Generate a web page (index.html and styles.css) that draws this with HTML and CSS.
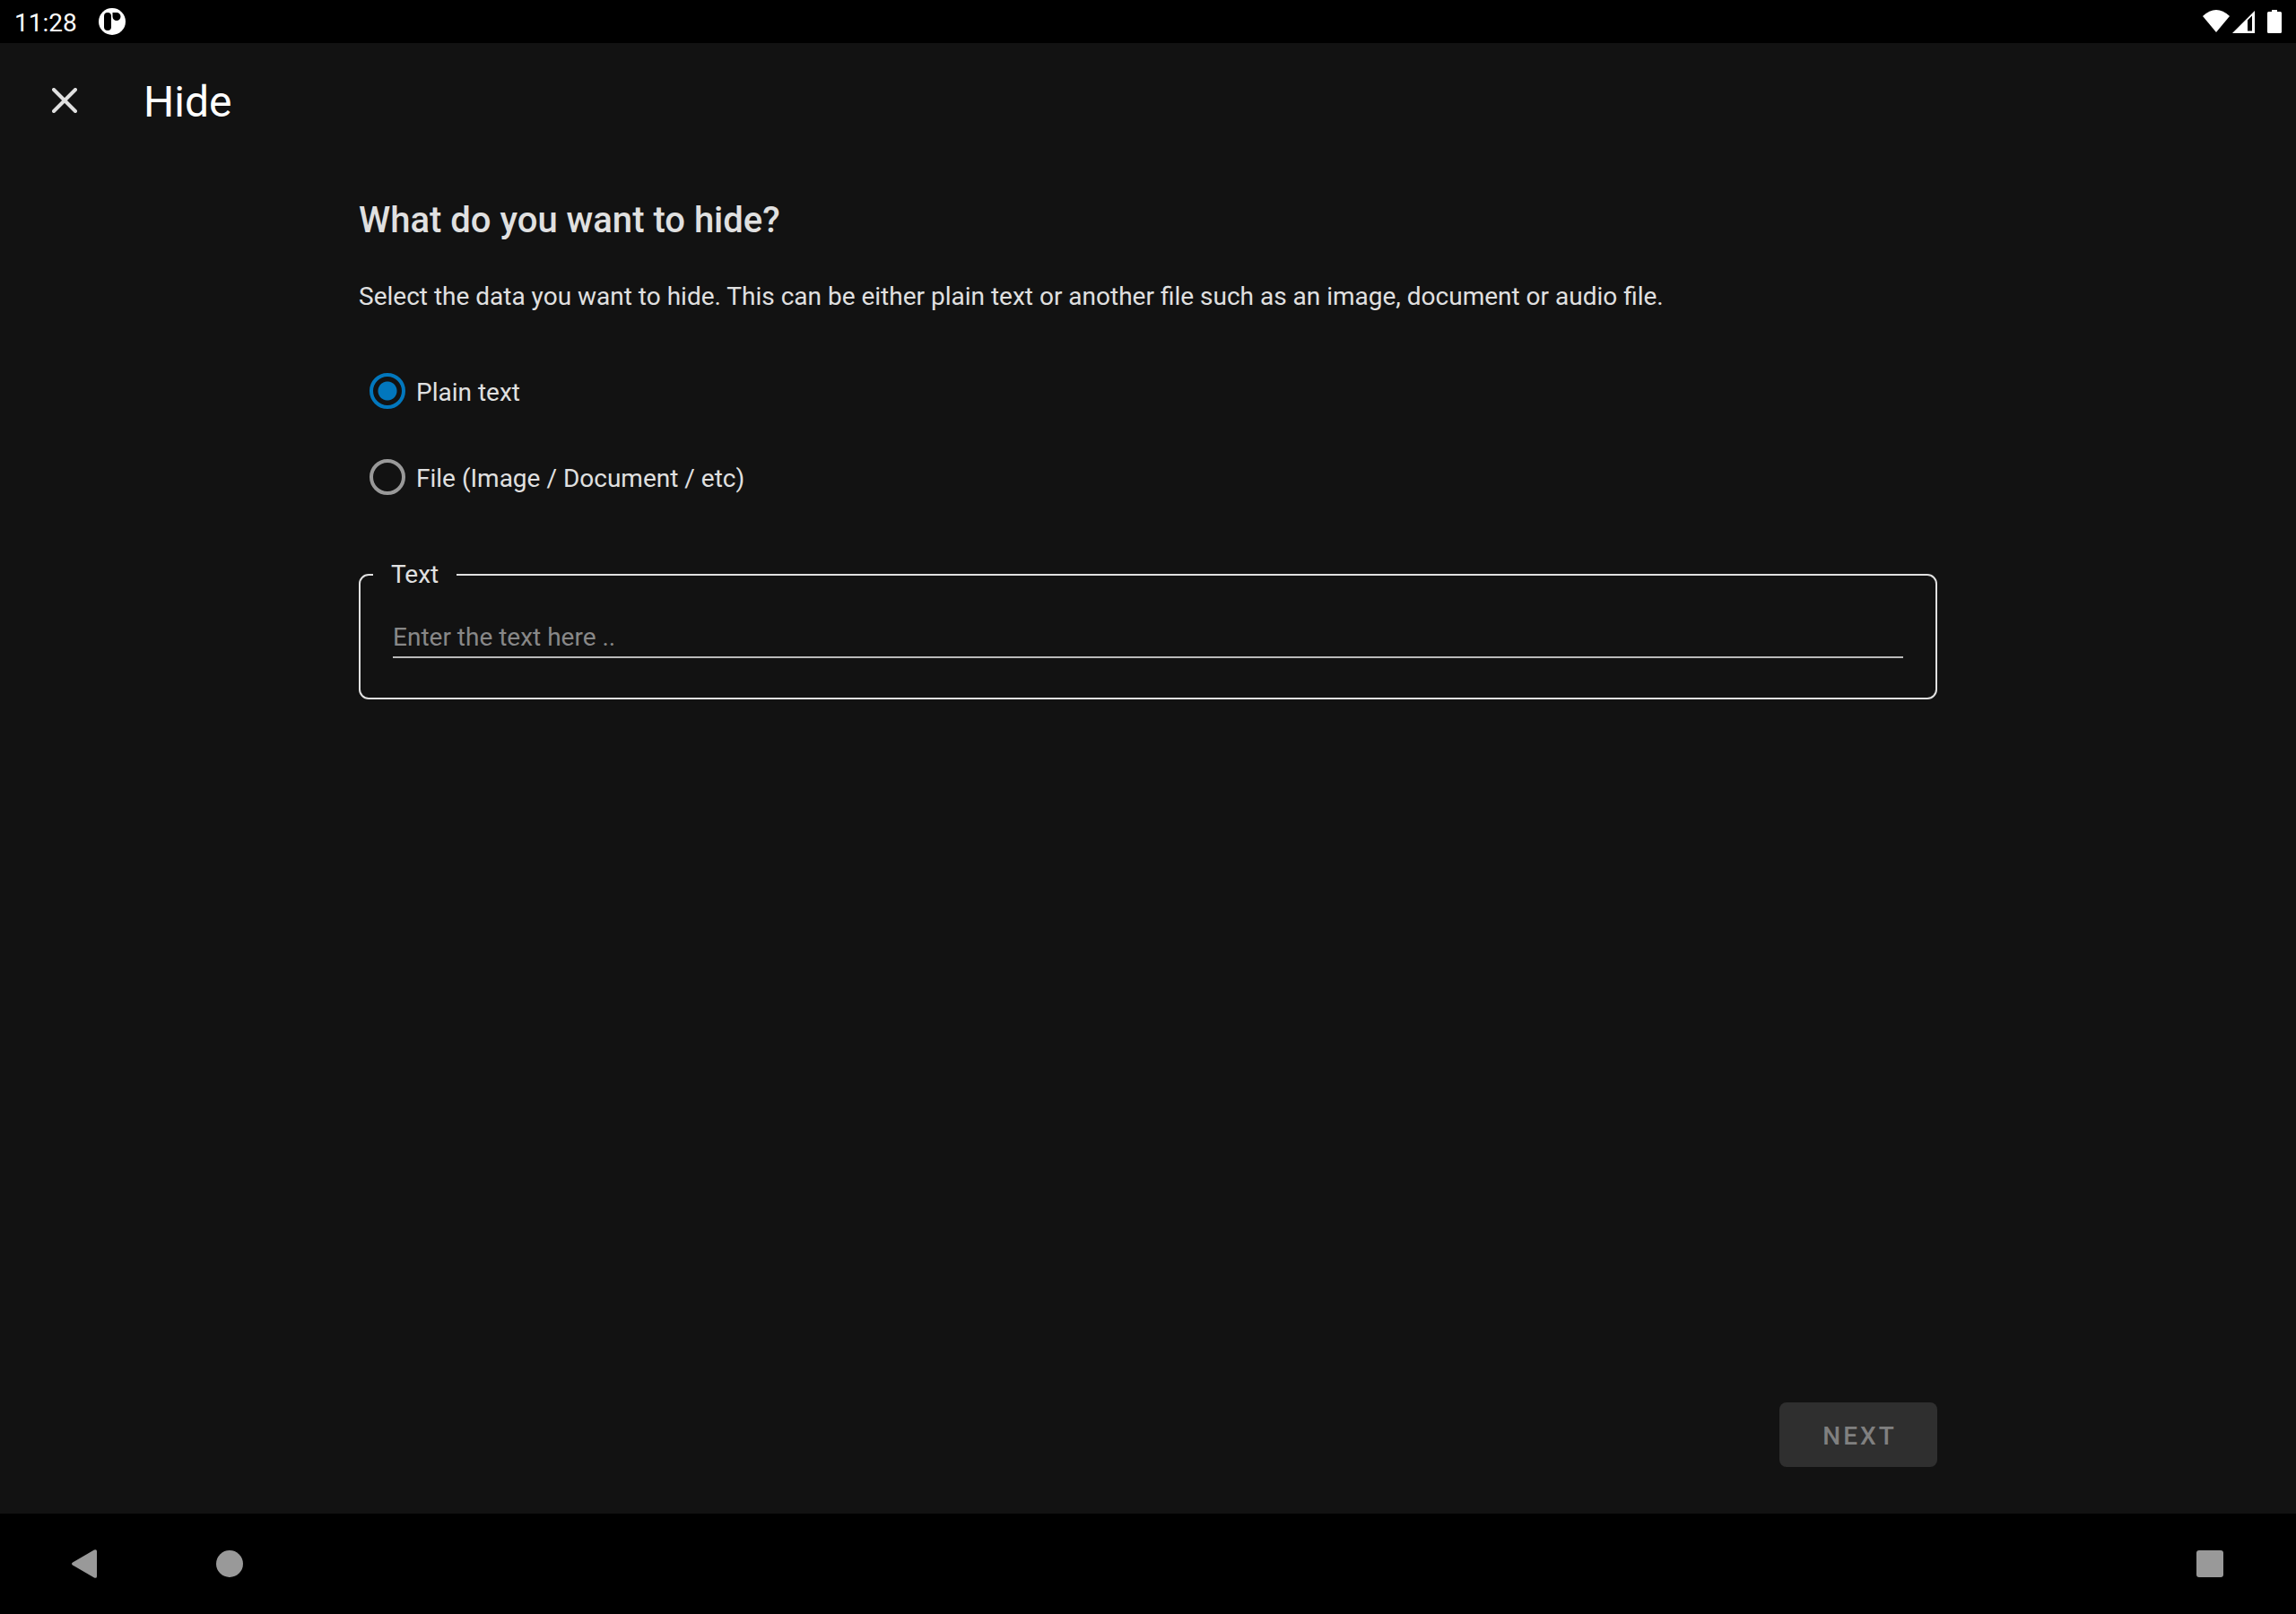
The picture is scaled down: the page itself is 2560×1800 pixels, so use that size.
FILE: index.html
```html
<!DOCTYPE html>
<html lang="en">
<head>
<meta charset="utf-8">
<meta name="viewport" content="width=device-width, initial-scale=1">
<title>Hide</title>
<link rel="stylesheet" href="styles.css">
</head>
<body>
<div class="screen">
  <div class="status-bar">
    <div class="status-group">
      <time class="clock">11:28</time>
      <svg class="status-icon" width="32" height="32" viewBox="0 0 32 32" aria-hidden="true">
        <circle cx="16" cy="16" r="15" fill="#fff"/>
        <rect x="7" y="6" width="8" height="20" rx="4" fill="#000"/>
        <path d="M16.500 6H21A4.500 4.500 0 1 1 16.500 10.500Z" fill="#000"/>
      </svg>
    </div>
    <svg width="90" height="28" viewBox="0 0 90 28" role="img" aria-label="Wi-Fi, mobile signal, battery">
      <path d="M0 8Q15-6 30 8L15 26Z" fill="#fff"/>
      <path d="M33 27L58 2V27ZM50 12.500V24.500H55V7.500Z" fill="#fff" fill-rule="evenodd"/>
      <path d="M77 1H83V3H86.500Q88 3 88 4.500V25.500Q88 27 86.500 27H73.500Q72 27 72 25.500V4.500Q72 3 73.500 3H77Z" fill="#fff"/>
    </svg>
  </div>
  <header class="app-bar">
    <button class="icon-button" type="button" aria-label="Close">
      <svg width="28" height="28" viewBox="0 0 28 28" aria-hidden="true">
        <path d="M2 2L26 26M26 2L2 26" stroke="#e0e0e0" stroke-width="4" stroke-linecap="round"/>
      </svg>
    </button>
    <h1 class="app-title">Hide</h1>
  </header>
  <main class="content">
    <h2 class="heading">What do you want to hide?</h2>
    <p class="intro">Select the data you want to hide. This can be either plain text or another file such as an image, document or audio file.</p>
    <div class="options" role="radiogroup" aria-label="Data type">
      <label class="option"><input class="radio" type="radio" name="kind" value="text" checked><span class="option-text">Plain text</span></label>
      <label class="option"><input class="radio" type="radio" name="kind" value="file"><span class="option-text">File (Image / Document / etc)</span></label>
    </div>
    <fieldset class="group">
      <legend class="group-title">Text</legend>
      <input class="text-field" type="text" placeholder="Enter the text here .." aria-label="Text">
    </fieldset>
    <div class="actions">
      <button class="next-button" type="button" disabled>NEXT</button>
    </div>
  </main>
  <nav class="nav-bar" aria-label="System navigation">
    <div class="nav-group">
      <button class="icon-button" type="button" aria-label="Back">
        <svg width="32" height="32" viewBox="0 0 32 32" aria-hidden="true"><path d="M3 14.600L27 .4Q30 -.5 30 2V30Q30 32.500 27 31.600L3 17.400Q1 16 3 14.600Z" fill="#999"/></svg>
      </button>
      <button class="icon-button" type="button" aria-label="Home">
        <svg width="32" height="32" viewBox="0 0 32 32" aria-hidden="true"><circle cx="16" cy="16" r="15" fill="#999"/></svg>
      </button>
    </div>
    <button class="icon-button" type="button" aria-label="Recent apps">
      <svg width="32" height="32" viewBox="0 0 32 32" aria-hidden="true"><rect x="1" y="1" width="30" height="30" rx="3" fill="#999"/></svg>
    </button>
  </nav>
</div>
</body>
</html>
```
FILE: styles.css
```css
* {
  box-sizing: border-box;
}

body {
  margin: 0;
  background: #121212;
  color: #e0e0e0;
  font-family: Roboto, sans-serif;
  font-size: 28px;
  line-height: 32px;
}

button,
input {
  font: inherit;
}

svg {
  display: block;
}

.screen {
  display: flex;
  flex-direction: column;
  min-height: 100vh;
}

.status-bar {
  display: flex;
  align-items: center;
  justify-content: space-between;
  height: 48px;
  padding: 0 14px 0 16px;
  background: #000;
  color: #fff;
}

.status-group {
  display: flex;
  align-items: center;
  gap: 23px;
}

.clock,
.app-title,
.option-text {
  padding-top: 4px;
}

.app-bar {
  display: flex;
  align-items: center;
  gap: 48px;
  height: 128px;
  padding: 0 32px;
}

.icon-button {
  display: flex;
  align-items: center;
  justify-content: center;
  width: 80px;
  height: 80px;
  padding: 0;
  border: 0;
  background: none;
}

.app-title {
  margin: 0;
  color: #fff;
  font-size: 48px;
  font-weight: 400;
  line-height: 56px;
}

.content {
  display: flex;
  flex: 1;
  flex-direction: column;
  width: 100%;
  max-width: 1824px;
  margin: 0 auto;
  padding: 46px 32px 52px;
}

.heading {
  margin: 0 0 45px;
  font-size: 40px;
  font-weight: 500;
  line-height: 48px;
}

.intro {
  margin: 0;
}

.options {
  display: flex;
  flex-direction: column;
  align-items: flex-start;
  gap: 48px;
  margin: 65px 0 69px;
}

.option {
  display: flex;
  align-items: center;
  gap: 12px;
  height: 48px;
  padding-left: 12px;
}

.radio {
  flex: none;
  width: 40px;
  height: 40px;
  margin: 0;
  border: 4px solid #999;
  border-radius: 50%;
  appearance: none;
}

.radio:checked {
  border-color: #0277bd;
  background: radial-gradient(circle, #0277bd 10px, transparent 11px);
}

.group {
  min-width: 0;
  margin: 0;
  padding: 37px 36px 44px;
  border: 2px solid #e0e0e0;
  border-radius: 11px;
}

.group-title {
  margin-left: -22px;
  padding: 0 20px;
}

.text-field {
  display: block;
  width: 100%;
  height: 40px;
  padding: 0 0 6px;
  border: 0;
  border-bottom: 2px solid #b9b9b9;
  border-radius: 0;
  outline: 0;
  background: none;
  color: #e0e0e0;
}

.text-field::placeholder {
  color: #888;
  opacity: 1;
}

.actions {
  display: flex;
  justify-content: flex-end;
  margin-top: auto;
}

.next-button {
  min-width: 176px;
  height: 72px;
  padding: 4px 32px 0 35px;
  border: 0;
  border-radius: 8px;
  background: #2f2f2f;
  color: #808080;
  font-weight: 500;
  letter-spacing: 3px;
}

.nav-bar {
  display: flex;
  align-items: center;
  justify-content: space-between;
  height: 112px;
  padding: 0 56px 0 54px;
  background: #000;
}

.nav-group {
  display: flex;
  gap: 82px;
}
```
